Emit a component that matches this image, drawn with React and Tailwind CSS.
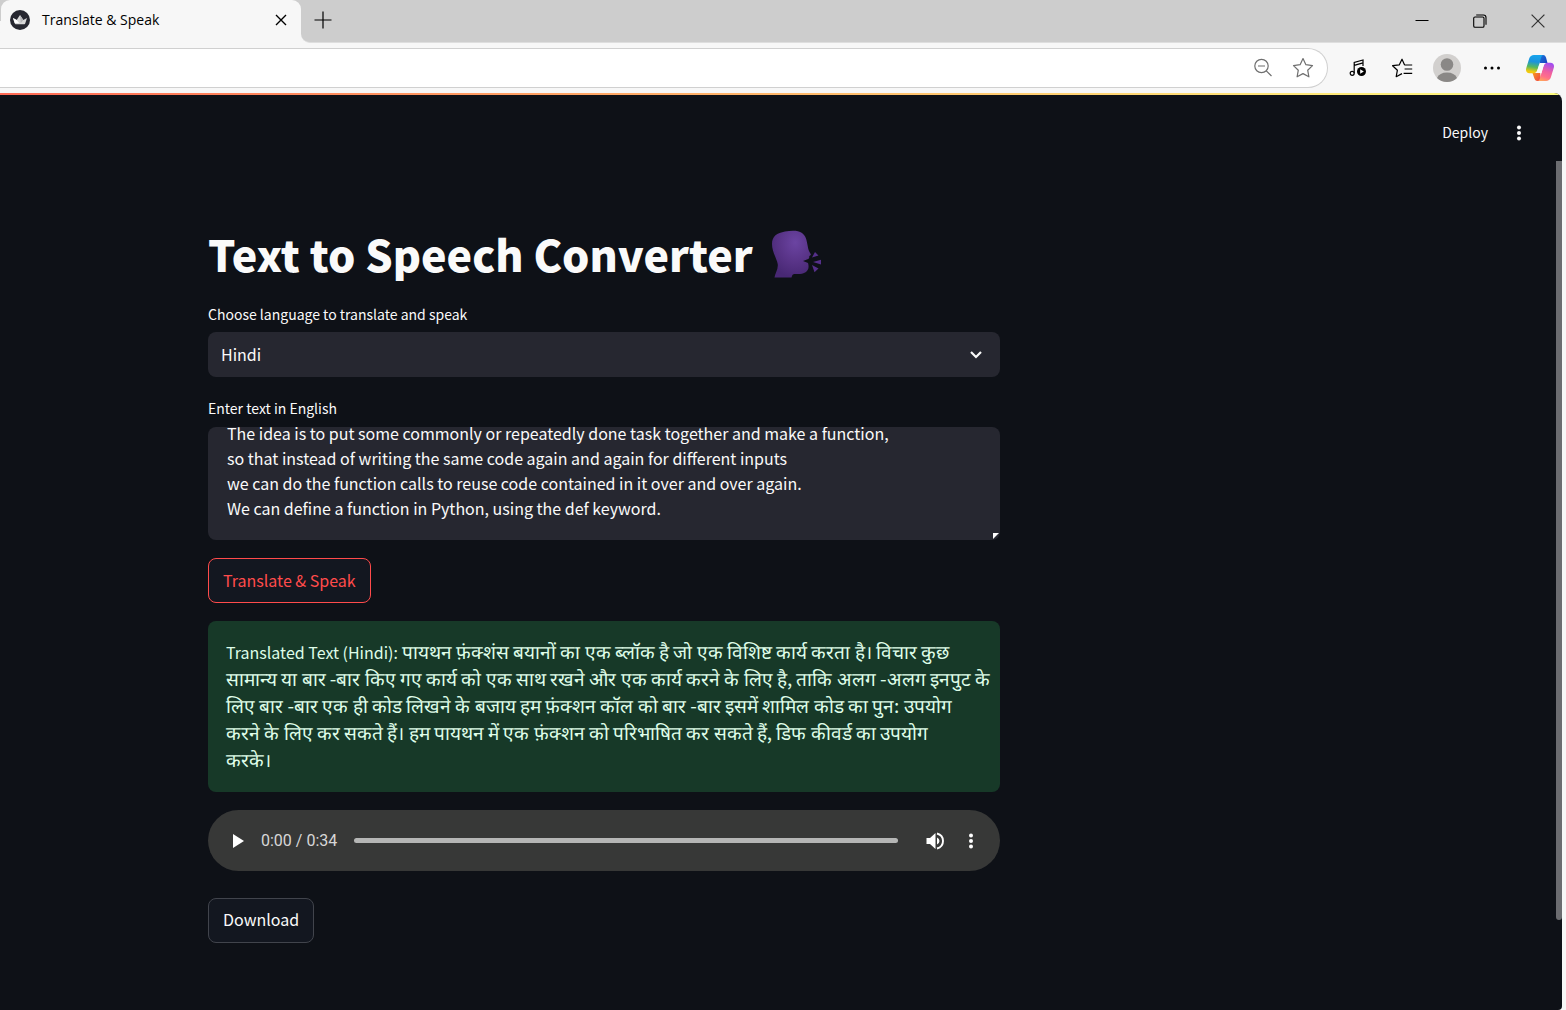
import { useEffect, useRef } from "react";

const LINES = [
  "The idea is to put some commonly or repeatedly done task together and make a function,",
  "so that instead of writing the same code again and again for different inputs",
  "we can do the function calls to reuse code contained in it over and over again.",
  "We can define a function in Python, using the def keyword.",
].join("\n");

const TRANSLATION = [
  "पायथन फ़ंक्शंस बयानों का एक ब्लॉक है जो एक विशिष्ट कार्य करता है। विचार कुछ",
  "सामान्य या बार -बार किए गए कार्य को एक साथ रखने और एक कार्य करने के लिए है, ताकि अलग -अलग इनपुट के",
  "लिए बार -बार एक ही कोड लिखने के बजाय हम फ़ंक्शन कॉल को बार -बार इसमें शामिल कोड का पुन: उपयोग",
  "करने के लिए कर सकते हैं। हम पायथन में एक फ़ंक्शन को परिभाषित कर सकते हैं, डिफ कीवर्ड का उपयोग",
  "करके।",
];

function Crown() {
  return (
    <svg viewBox="0 0 20 20" className="size-5 shrink-0" aria-hidden="true">
      <circle cx="10" cy="10" r="10" fill="#262730" />
      <path d="M3 8l3.7 1.9L9.6 5.4q.4-.5.8 0l2.9 4.5L17 8l-1.8 5.6q-.2.6-.9.6H5.7q-.7 0-.9-.6z" fill="#d8d8d8" />
      <path d="M3 8l3.7 1.9 2.6 3.4-4.6-.4z" fill="#fff" />
      <path d="M10 5.2l3.3 4.7-2.6 3.3z" fill="#b5b5b8" />
    </svg>
  );
}

function Copilot() {
  return (
    <svg viewBox="0 0 28 26" className="h-[26px] w-7" aria-hidden="true">
      <defs>
        <linearGradient id="cpLeft" x1="0.4" y1="0" x2="0.25" y2="1">
          <stop offset="0" stopColor="#17a4ec" />
          <stop offset="0.35" stopColor="#1b93dc" />
          <stop offset="0.65" stopColor="#57b95c" />
          <stop offset="0.9" stopColor="#f1c90e" />
        </linearGradient>
        <linearGradient id="cpRight" x1="0.6" y1="0" x2="0.3" y2="1">
          <stop offset="0" stopColor="#a24df0" />
          <stop offset="0.45" stopColor="#ef5fa0" />
          <stop offset="0.75" stopColor="#ff6f8a" />
          <stop offset="1" stopColor="#ffa45c" />
        </linearGradient>
        <linearGradient id="cpTop" x1="0" y1="0" x2="1" y2="1">
          <stop offset="0" stopColor="#1c7fe0" />
          <stop offset="1" stopColor="#1637b8" />
        </linearGradient>
        <linearGradient id="cpBottom" x1="0" y1="0" x2="1" y2="1">
          <stop offset="0" stopColor="#f9a21a" />
          <stop offset="1" stopColor="#ee3d46" />
        </linearGradient>
      </defs>
      <path d="M12 0h5c1.800 0 2.600 1.200 3.100 2.800L21.500 8H18c-2 0-3.200.4-4 2z" fill="url(#cpTop)" />
      <path d="M6.500 18H10c2 0 3.200-.4 4-2l1 10h-3.500c-1.800 0-2.700-1.100-3.200-2.700z" fill="url(#cpBottom)" />
      <path d="M8 0h9.500c-1.300 0-2 1.300-2.500 3l-3.400 11.500C10.900 16.800 9.500 18.200 7.500 18.200h-4C.6 18.200-.5 16 .2 13.300L3.200 3.500C4 1.200 5.600 0 8 0z" fill="url(#cpLeft)" />
      <path d="M20 26h-8.500c1.300 0 2-1.300 2.500-3l3.400-11.500C18.100 9.200 19.500 7.800 21.500 7.800h3c2.900 0 4 2.200 3.300 4.900l-3 9.800C24 24.800 22.400 26 20 26z" fill="url(#cpRight)" />
      <path d="M14 8h4.500l-1.100 3.500-2 6.500h-4.900l1.100-3.500z" fill="#fafafa" />
    </svg>
  );
}

function SpeakingHead() {
  return (
    <svg viewBox="0 0 50 48" className="mt-0.5 h-12 w-[50px] shrink-0" role="img" aria-label="Speaking head">
      <defs>
        <radialGradient id="headTone" cx="0.6" cy="0.25" r="0.75">
          <stop offset="0" stopColor="#6b44a2" />
          <stop offset="0.55" stopColor="#593488" />
          <stop offset="1" stopColor="#482874" />
        </radialGradient>
      </defs>
      <path d="M1 14C1 6 6 3 14 1.500c6-1 13-1.500 17 1.500 4 3 4.500 7 5.500 12 .5 3 1 5 2 7l1.200 2c.5 1-.2 1.700-1.500 2 .3 1.500 0 2.500-1 3L32 31l5 2c1.200 4 .5 7-2 9-3.500 2.500-8 2-11.500 2-1.500 0-2.500 1-3 3.500H3.500c.5-4 4-9 3.200-13.500C6 29 1 22 1 14z" fill="url(#headTone)" />
      <path d="M41 27.500l3-5.500 3.500 3.500zM42 32l8-2.300v4.800zM41 35l6.500 3.500-4 3.800z" fill="#55308a" />
    </svg>
  );
}

function Dots() {
  return (
    <svg viewBox="0 0 6 18" className="h-[18px] w-1.5" fill="currentColor" aria-hidden="true">
      <circle cx="3" cy="3.500" r="2" />
      <circle cx="3" cy="9" r="2" />
      <circle cx="3" cy="14.500" r="2" />
    </svg>
  );
}

function BrowserChrome() {
  return (
    <div className="bg-[#f7f7f7] text-black">
      <div className="flex h-[43px] items-stretch bg-[#f7f7f7]">
        <div className="w-[304px] bg-gradient-to-b from-[#cdcdcd] from-50% to-[#f7f7f7] to-50%">
          <div className="mr-[3px] ml-px flex h-full items-center rounded-t-[9px] bg-[#f7f7f7] pr-[14px] pb-[3px] pl-[9px]">
            <Crown />
            <span className="ml-3 flex-1 font-['Open_Sans',sans-serif] text-sm leading-5">Translate &amp; Speak</span>
            <button aria-label="Close tab">
              <svg viewBox="0 0 12 12" className="size-3" fill="none" stroke="currentColor" strokeWidth="1.400" aria-hidden="true">
                <path d="M1 1l10 10M11 1L1 11" />
              </svg>
            </button>
          </div>
        </div>
        <div className="-ml-[3px] flex flex-1 items-center justify-between rounded-bl-[9px] border-b border-[#dedede] bg-[#cdcdcd] pr-[21px] pb-[3px] pl-[13px]">
          <button aria-label="New tab">
            <svg viewBox="0 0 18 18" className="size-[18px]" fill="none" stroke="currentColor" strokeWidth="1.200" aria-hidden="true">
              <path d="M9 .5v17M.5 9h17" />
            </svg>
          </button>
          <div className="flex items-center gap-[44px] pt-[3px]">
            <button aria-label="Minimize">
              <svg viewBox="0 0 14 14" className="size-3.5" fill="none" stroke="currentColor" aria-hidden="true">
                <path d="M.5 6.500h13" />
              </svg>
            </button>
            <button aria-label="Restore">
              <svg viewBox="0 0 14 14" className="size-3.5" fill="none" stroke="currentColor" strokeWidth="1.100" aria-hidden="true">
                <rect x=".7" y="3" width="10.300" height="10.300" rx="1.300" />
                <path d="M3.200 1h7.300Q13 1 13 3.500v7.300" />
              </svg>
            </button>
            <button aria-label="Close">
              <svg viewBox="0 0 14 14" className="size-3.5" fill="none" stroke="#333" strokeWidth="1.200" aria-hidden="true">
                <path d="M.6.600l12.800 12.800M13.400.600L.6 13.400" />
              </svg>
            </button>
          </div>
        </div>
      </div>
      <div className="flex h-[50px] items-center pr-3">
        <div className="flex h-10 flex-1 items-center justify-end gap-[19px] rounded-r-full border border-l-0 border-[#d0d0d0] bg-white pr-[13px] text-[#6f6f6f]">
          <input aria-label="Address" className="h-full min-w-0 flex-1 outline-none" />
          <button aria-label="Zoom">
            <svg viewBox="0 0 20 20" className="size-5" fill="none" stroke="currentColor" strokeWidth="1.200" aria-hidden="true">
              <circle cx="8.500" cy="8" r="6.700" />
              <path d="M13.300 12.800l5.200 5.200M5 8h7" />
            </svg>
          </button>
          <button aria-label="Add to favorites">
            <svg viewBox="0 0 22 22" className="size-[22px]" fill="none" stroke="currentColor" strokeWidth="1.200" strokeLinejoin="round" aria-hidden="true">
              <path d="M11 1.600l2.900 6.100 6.600.9-4.800 4.600 1.200 6.600-5.900-3.200-5.900 3.200 1.200-6.600L1.500 8.600l6.600-.9z" />
            </svg>
          </button>
        </div>
        <div className="flex items-center pl-[21px]">
          <button aria-label="Media control">
            <svg viewBox="0 0 18 18" className="size-[18px]" fill="none" stroke="currentColor" strokeWidth="1.200" aria-hidden="true">
              <circle cx="3.200" cy="14.300" r="2" />
              <path d="M5.200 14.300V3.500L14 1v6M5.200 6.300L14 3.800" />
              <circle cx="12.500" cy="12.500" r="4.500" fill="currentColor" stroke="none" />
              <path d="M11.200 10.200v4.600l3.600-2.300z" fill="#fff" stroke="none" />
            </svg>
          </button>
          <button aria-label="Favorites" className="ml-6">
            <svg viewBox="0 0 22 22" className="size-[22px]" fill="none" stroke="currentColor" strokeWidth="1.200" strokeLinejoin="round" aria-hidden="true">
              <path d="M13.600 8L11 2.200 8.200 7.900l-6.600.8 4.800 4.500-1.200 6.500 5.800-3.100M13.600 8h7.600M13.600 12h7.600M12.600 16.300h8.600" />
            </svg>
          </button>
          <button aria-label="Profile" className="ml-5">
            <svg viewBox="0 0 28 28" className="size-7" aria-hidden="true">
              <circle cx="14" cy="14" r="14" fill="#d2d0ce" />
              <circle cx="14" cy="10.500" r="6.300" fill="#8a8886" />
              <path d="M4 24q2.500-5.500 10-5.500T24 24q-4 4-10 4T4 24z" fill="#8a8886" />
            </svg>
          </button>
          <button aria-label="Settings and more" className="ml-[22px]">
            <svg viewBox="0 0 18 4" className="h-1 w-[18px]" fill="currentColor" aria-hidden="true">
              <circle cx="2.500" cy="2" r="1.500" />
              <circle cx="9" cy="2" r="1.500" />
              <circle cx="15.500" cy="2" r="1.500" />
            </svg>
          </button>
          <button aria-label="Copilot" className="ml-[25px]">
            <Copilot />
          </button>
        </div>
      </div>
    </div>
  );
}

function AudioPlayer() {
  return (
    <div className="mt-[18px] flex h-[61px] items-center rounded-full bg-[#373837] pr-[26px] pl-[25px] text-white">
      <button aria-label="Play">
        <svg viewBox="0 0 11 14" className="h-3.5 w-[11px]" fill="currentColor" aria-hidden="true">
          <path d="M0 0l11 7-11 7z" />
        </svg>
      </button>
      <span className="ml-[17px] font-[Roboto,sans-serif] text-base leading-5 text-[#d7d7d7]">0:00 / 0:34</span>
      <input
        type="range"
        aria-label="Playback position"
        min="0"
        max="34"
        defaultValue="0"
        className="ml-[17px] h-[5px] min-w-0 flex-1 appearance-none rounded-full bg-[#b5b6b5] [&::-webkit-slider-thumb]:size-0 [&::-webkit-slider-thumb]:appearance-none"
      />
      <button aria-label="Mute" className="ml-7">
        <svg viewBox="0 0 18 18" className="size-[18px]" aria-hidden="true">
          <path d="M.5 6v6H4l5.500 5V1L4 6z" fill="currentColor" />
          <path d="M11 5.500q2.500 1.200 2.500 3.500T11 12.500z" fill="currentColor" />
          <path d="M11 1.500q6 1.500 6 7.500t-6 7.500" fill="none" stroke="currentColor" strokeWidth="1.900" />
        </svg>
      </button>
      <button aria-label="More media options" className="ml-6">
        <Dots />
      </button>
    </div>
  );
}

export default function App() {
  const area = useRef(null);
  useEffect(() => {
    area.current.scrollTop = area.current.scrollHeight;
  }, []);

  return (
    <div className="flex min-h-screen flex-col bg-[#f7f7f7] font-['Source_Sans_Pro','Noto_Sans_CJK_SC',sans-serif] text-base text-[#fafafa]">
      <BrowserChrome />
      <div className="mr-1 flex flex-1 flex-col overflow-hidden rounded-tr-lg rounded-br-sm bg-[#0e1117]">
        <div className="h-0.5 bg-gradient-to-r from-[#ff6a55] to-[#fffd80]" />
        <header className="flex h-[66px] items-center justify-end gap-7 pt-[10px] pr-10">
          <button className="pb-0.5 text-sm leading-5">Deploy</button>
          <button aria-label="Main menu">
            <Dots />
          </button>
        </header>
        <div className="flex flex-1 justify-between">
          <main className="ml-[208px] w-full max-w-[792px] pt-[62px] pb-[67px]">
            <h1 className="flex items-center gap-[18px] text-[43px] leading-[60px] font-black">
              Text to Speech Converter
              <SpeakingHead />
            </h1>
            <label htmlFor="language" className="mt-5 block text-sm leading-[22px]">
              Choose language to translate and speak
            </label>
            <div className="relative mt-[7px]">
              <select id="language" defaultValue="Hindi" className="block h-[45px] w-full appearance-none rounded-lg bg-[#262730] px-[13px] pb-0.5">
                <option>Hindi</option>
              </select>
              <svg viewBox="0 0 12 8" className="pointer-events-none absolute top-[19px] right-[18px] h-2 w-3" fill="none" stroke="currentColor" strokeWidth="2.200" aria-hidden="true">
                <path d="M1 1l5 5 5-5" />
              </svg>
            </div>
            <label htmlFor="source" className="mt-5 block text-sm leading-[22px]">
              Enter text in English
            </label>
            <div className="relative mt-2">
              <textarea
                id="source"
                ref={area}
                defaultValue={LINES}
                className="block h-[113px] w-full resize-none rounded-lg bg-[#262730] px-[19px] pb-[19px] leading-[25px] outline-none [scrollbar-width:none]"
              />
              <svg viewBox="0 0 6 6" className="pointer-events-none absolute right-px bottom-px size-1.5" fill="#fff" aria-hidden="true">
                <path d="M0 0h6L0 6z" />
              </svg>
            </div>
            <button className="mt-[18px] block h-[45px] rounded-lg border border-[#ff4b4b] bg-[#131720] px-[14px] pb-0.5 text-[#ff4b4b]">
              Translate &amp; Speak
            </button>
            <div className="mt-[18px] rounded-lg bg-[#173928] px-[18px] pt-4 pb-5 text-[19px] leading-[27px] text-[#dffde9]">
              {TRANSLATION.map((line, i) => (
                <p key={line} className="h-[27px] whitespace-nowrap">
                  {i === 0 && <span className="text-base leading-[27px]">Translated Text (Hindi): </span>}
                  {line}
                </p>
              ))}
            </div>
            <AudioPlayer />
            <button className="mt-[27px] block h-[45px] rounded-lg border border-[#41444c] bg-[#131720] px-[14px] pb-[3px]">Download</button>
          </main>
          <div className="mb-[90px] w-1.5 rounded-b-full bg-[#6b6c70]" />
        </div>
      </div>
    </div>
  );
}
